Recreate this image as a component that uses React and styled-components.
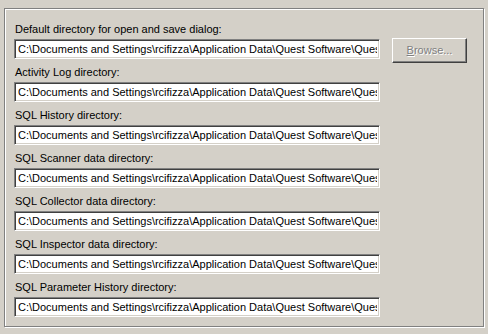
import React from "react";
import styled, { createGlobalStyle } from "styled-components";

const Global = createGlobalStyle`
  html, body { margin: 0; padding: 0; background: #d4d0c8; }
  body { width: 488px; height: 334px; overflow: hidden; font-family: "Liberation Sans", Arial, sans-serif; }
`;

const Page = styled.div`
  width: 488px;
  height: 334px;
  padding: 8px 4px 0 4px;
  box-sizing: border-box;
  background: #d4d0c8;
`;

const GroupBox = styled.div`
  width: 480px;
  height: 319px;
  box-sizing: border-box;
  border: 1px solid #808080;
  box-shadow: inset 1px 1px 0 #fff, 1px 1px 0 #fff;
  padding: 7px 0 0 9px;
`;

const Grid = styled.div`
  display: grid;
  grid-template-columns: 366px 75px;
  grid-auto-rows: auto;
  column-gap: 12px;
`;

const Label = styled.div`
  grid-column: 1;
  height: 23px;
  box-sizing: border-box;
  padding: 7px 0 0 1px;
  font-size: 11px;
  line-height: 13px;
  color: #000;
  white-space: nowrap;
`;

const Field = styled.input`
  grid-column: 1;
  width: 366px;
  height: 20px;
  box-sizing: border-box;
  margin: 0;
  padding: 0 2px 1px 3px;
  border-style: solid;
  border-width: 1px;
  border-color: #808080 #fff #fff #808080;
  box-shadow: inset 1px 1px 0 #404040, inset -1px -1px 0 #d4d0c8;
  background: #fff;
  color: #000;
  font-family: "Liberation Sans", Arial, sans-serif;
  font-size: 11px;
  outline: none;
`;

const Button = styled.button`
  grid-column: 2;
  grid-row: 2 / span 2;
  align-self: start;
  margin-top: -1px;
  width: 75px;
  height: 25px;
  box-sizing: border-box;
  padding: 0 0 1px 0;
  border-style: solid;
  border-width: 1px;
  border-color: #fff #404040 #404040 #fff;
  box-shadow: inset -1px -1px 0 #808080, inset 1px 1px 0 #d4d0c8;
  background: #d4d0c8;
  color: #808080;
  text-shadow: 1px 1px 0 #fff;
  font-family: "Liberation Sans", Arial, sans-serif;
  font-size: 11px;
  cursor: default;
`;

const Accel = styled.span`
  text-decoration: underline;
`;

const PATH =
  "C:\\Documents and Settings\\rcifizza\\Application Data\\Quest Software\\Quest Central for Oracle";

const rows = [
  "Default directory for open and save dialog:",
  "Activity Log directory:",
  "SQL History directory:",
  "SQL Scanner data directory:",
  "SQL Collector data directory:",
  "SQL Inspector data directory:",
  "SQL Parameter History directory:",
];

export default function App() {
  return (
    <Page>
      <Global />
      <GroupBox>
        <Grid>
          {rows.map((label, i) => (
            <React.Fragment key={label}>
              <Label style={{ gridRow: i * 2 + 1 }}>{label}</Label>
              <Field style={{ gridRow: i * 2 + 2 }} readOnly value={PATH} />
            </React.Fragment>
          ))}
          <Button disabled>
            <Accel>B</Accel>rowse...
          </Button>
        </Grid>
      </GroupBox>
    </Page>
  );
}
